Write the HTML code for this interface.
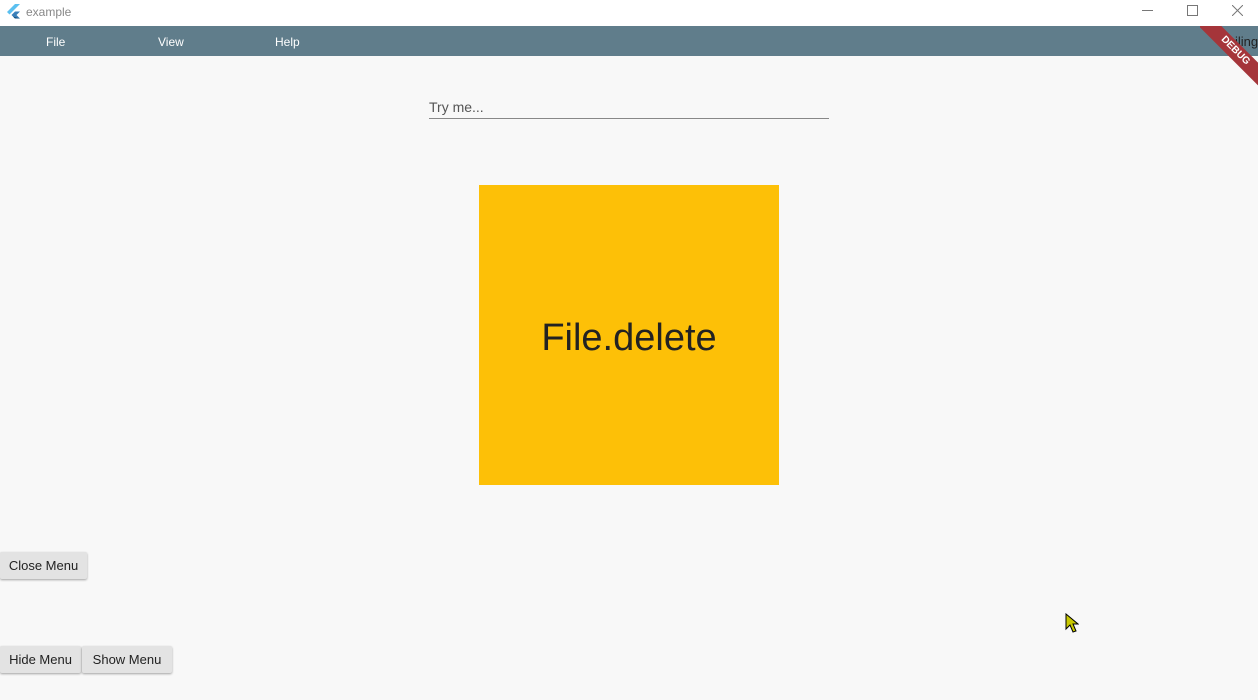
<!DOCTYPE html>
<html><head><style>
body{margin:0;width:1258px;height:700px;background:#f8f8f8;position:relative;overflow:hidden;font-family:"Liberation Sans",sans-serif;}
.tb{position:absolute;left:0;top:0;width:1258px;height:26px;background:#fff;}
.mb{position:absolute;left:0;top:26px;width:1258px;height:30px;background:#607d8b;color:#fff;font-size:12px;}
.mb span{position:absolute;top:9px;}
.btn{position:absolute;background:#e3e3e3;color:#222;font-size:13px;height:27px;line-height:27px;box-shadow:0 1px 2px rgba(0,0,0,.35);border-radius:2px;text-align:center;}
</style></head><body>
<div class="tb">
<svg style="position:absolute;left:7px;top:4px" width="13" height="16" viewBox="0 0 13 16"><path d="M8 0L0 8l2.5 2.5L13 0z" fill="#5bc0f0"/><path d="M8 7.5L4.5 11l3.5 3.5H13L9.5 11 13 7.5z" fill="#3a7fb8"/><path d="M6 12.5l2 2H13z" fill="#0d4a7a"/></svg>
<span style="position:absolute;left:26px;top:5px;font-size:12px;color:#888">example</span>
<div style="position:absolute;left:1142px;top:10px;width:11px;height:1px;background:#777"></div>
<div style="position:absolute;left:1187px;top:5px;width:9px;height:9px;border:1px solid #777"></div>
<svg style="position:absolute;left:1232px;top:5px" width="11" height="11"><path d="M0 0L11 11M11 0L0 11" stroke="#777" stroke-width="1"/></svg>
</div>
<div class="mb"><span style="left:46px">File</span><span style="left:158px">View</span><span style="left:275px">Help</span>
<span style="left:1216px;top:8px;color:#222;font-size:13px">Trailing</span></div>
<div style="position:absolute;left:1200px;top:26px;width:58px;height:60px;overflow:hidden">
<div style="position:absolute;left:-15px;top:17px;width:100px;height:16px;background:#a5353a;transform:rotate(45deg);transform-origin:50% 50%;color:#fff;font-size:10px;font-weight:bold;text-align:center;line-height:16px">DEBUG</div></div>
<div style="position:absolute;left:429px;top:99px;font-size:14px;color:#555">Try me...</div>
<div style="position:absolute;left:429px;top:118px;width:400px;height:1px;background:#888"></div>
<div style="position:absolute;left:479px;top:185px;width:300px;height:300px;background:#fdc007;display:flex;align-items:center;justify-content:center;font-size:38px;color:#222;padding-top:6px;box-sizing:border-box">File.delete</div>
<div class="btn" style="left:0;top:552px;width:87px">Close Menu</div>
<div class="btn" style="left:0;top:646px;width:81px">Hide Menu</div>
<div class="btn" style="left:82px;top:646px;width:90px">Show Menu</div>
<svg style="position:absolute;left:1065px;top:613px" width="14" height="20"><path d="M1 1V16L5 12L8 19L11 18L8 11H13Z" fill="#c8c800" stroke="#000" stroke-width="1"/></svg>
</body></html>
